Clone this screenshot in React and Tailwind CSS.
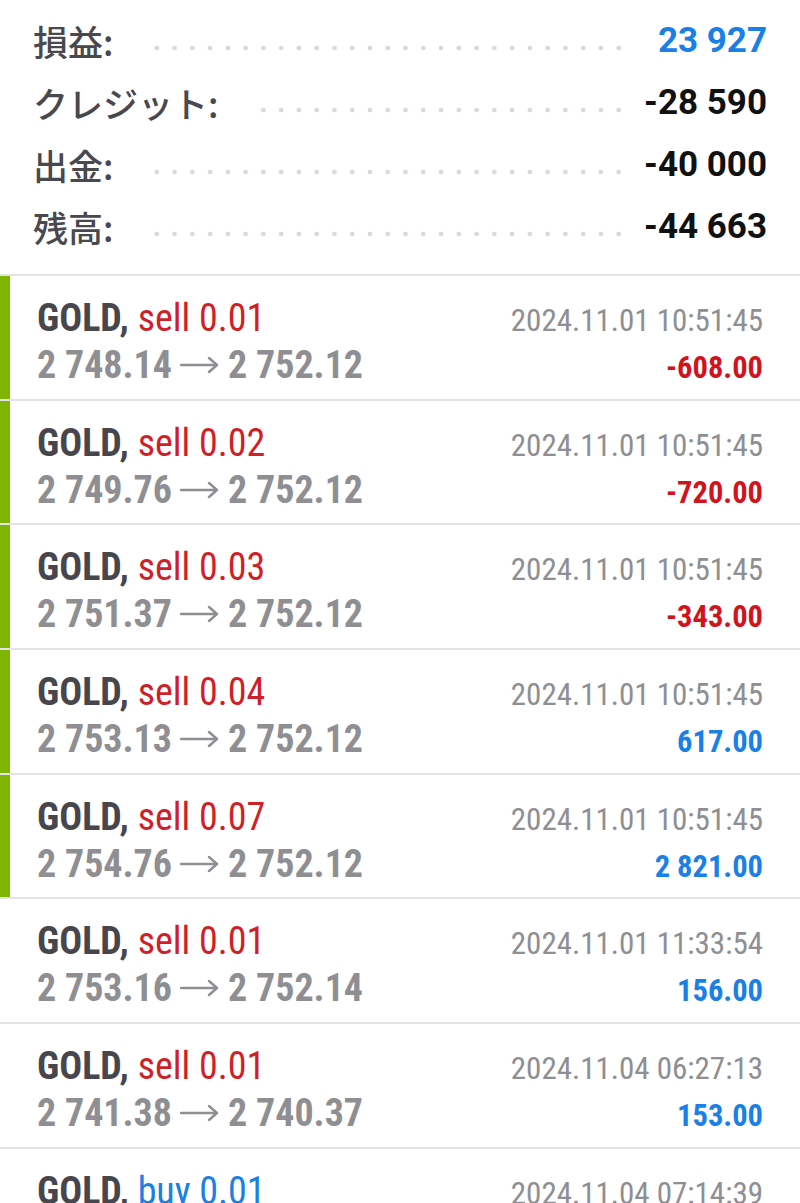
import React from 'react';

const summary = [
  { label: '損益:', value: '23 927', color: 'text-[#1a80e6]' },
  { label: 'クレジット:', value: '-28 590', color: 'text-[#111111]' },
  { label: '出金:', value: '-40 000', color: 'text-[#111111]' },
  { label: '残高:', value: '-44 663', color: 'text-[#111111]' },
];

const trades = [
  { side: 'sell', vol: '0.01', open: '2 748.14', close: '2 752.12', time: '2024.11.01 10:51:45', profit: '-608.00', bar: true },
  { side: 'sell', vol: '0.02', open: '2 749.76', close: '2 752.12', time: '2024.11.01 10:51:45', profit: '-720.00', bar: true },
  { side: 'sell', vol: '0.03', open: '2 751.37', close: '2 752.12', time: '2024.11.01 10:51:45', profit: '-343.00', bar: true },
  { side: 'sell', vol: '0.04', open: '2 753.13', close: '2 752.12', time: '2024.11.01 10:51:45', profit: '617.00', bar: true },
  { side: 'sell', vol: '0.07', open: '2 754.76', close: '2 752.12', time: '2024.11.01 10:51:45', profit: '2 821.00', bar: true },
  { side: 'sell', vol: '0.01', open: '2 753.16', close: '2 752.14', time: '2024.11.01 11:33:54', profit: '156.00', bar: false },
  { side: 'sell', vol: '0.01', open: '2 741.38', close: '2 740.37', time: '2024.11.04 06:27:13', profit: '153.00', bar: false },
  { side: 'buy', vol: '0.01', open: '2 738.52', close: '2 739.46', time: '2024.11.04 07:14:39', profit: '94.00', bar: false },
];

const Arrow = () => (
  <svg width="40" height="18" viewBox="0 0 40 18" className="mx-[8px] shrink-0 self-center" fill="none">
    <path d="M1 9H37M29 2L37 9L29 16" stroke="#8e8e93" strokeWidth="2.4" strokeLinecap="round" strokeLinejoin="round" />
  </svg>
);

const SummaryRow = ({ label, value, color }) => (
  <div className="flex h-[62px] items-center">
    <span className="text-[35px] leading-none font-medium text-[#48484e] font-['Noto_Sans_CJK_JP',sans-serif]">{label}</span>
    {/* dotted leader, tiles anchored on the right so every row shares one grid */}
    <div className="ml-[40px] flex-1 self-stretch bg-[radial-gradient(circle_at_8.9px_39px,#d9d9d9_2px,transparent_2.7px)] bg-size-[17.77px_62px] bg-right bg-repeat-x" />
    <span className={`w-[139px] text-right text-[35px] leading-none font-bold font-['Roboto',sans-serif] ${color}`}>
      {value}
    </span>
  </div>
);

const TradeRow = ({ side, vol, open, close, time, profit, bar }) => {
  const negative = profit.startsWith('-');
  return (
    <div className="flex h-[124.7px] border-b-2 border-[#e3e3e3]">
      {bar && <div className="w-[10px] bg-[#7db500]" />}
      <div className={`flex flex-1 flex-col pt-[20px] pr-[37px] ${bar ? 'pl-[27px]' : 'pl-[37px]'}`}>
        <div className="flex items-baseline justify-between leading-[44px]">
          <span className="text-[38px]">
            <span className="font-bold text-[#46464c]">GOLD,</span>{' '}
            <span className={side === 'sell' ? 'text-[#cf1f28]' : 'text-[#1a80e6]'}>
              {side} {vol}
            </span>
          </span>
          <span className="text-[31px] text-[#8e8e93]">{time}</span>
        </div>
        <div className="flex items-baseline justify-between leading-[44px]">
          <span className="flex text-[38px] font-bold text-[#8e8e93]">
            <span>{open}</span>
            <Arrow />
            <span>{close}</span>
          </span>
          <span className={`text-[30.5px] font-bold ${negative ? 'text-[#d0141e]' : 'text-[#1a80e6]'}`}>{profit}</span>
        </div>
      </div>
    </div>
  );
};

export default function App() {
  return (
    <div className="min-h-[1203px] w-[800px] overflow-hidden bg-white font-['Roboto_Condensed','Liberation_Sans_Narrow','Roboto',sans-serif]">
      <div className="border-b-2 border-[#e3e3e3] pt-[9px] pb-[17px] pl-[33px] pr-[33px]">
        {summary.map((row) => (
          <SummaryRow key={row.label} {...row} />
        ))}
      </div>
      {trades.map((t, i) => (
        <TradeRow key={i} {...t} />
      ))}
    </div>
  );
}
